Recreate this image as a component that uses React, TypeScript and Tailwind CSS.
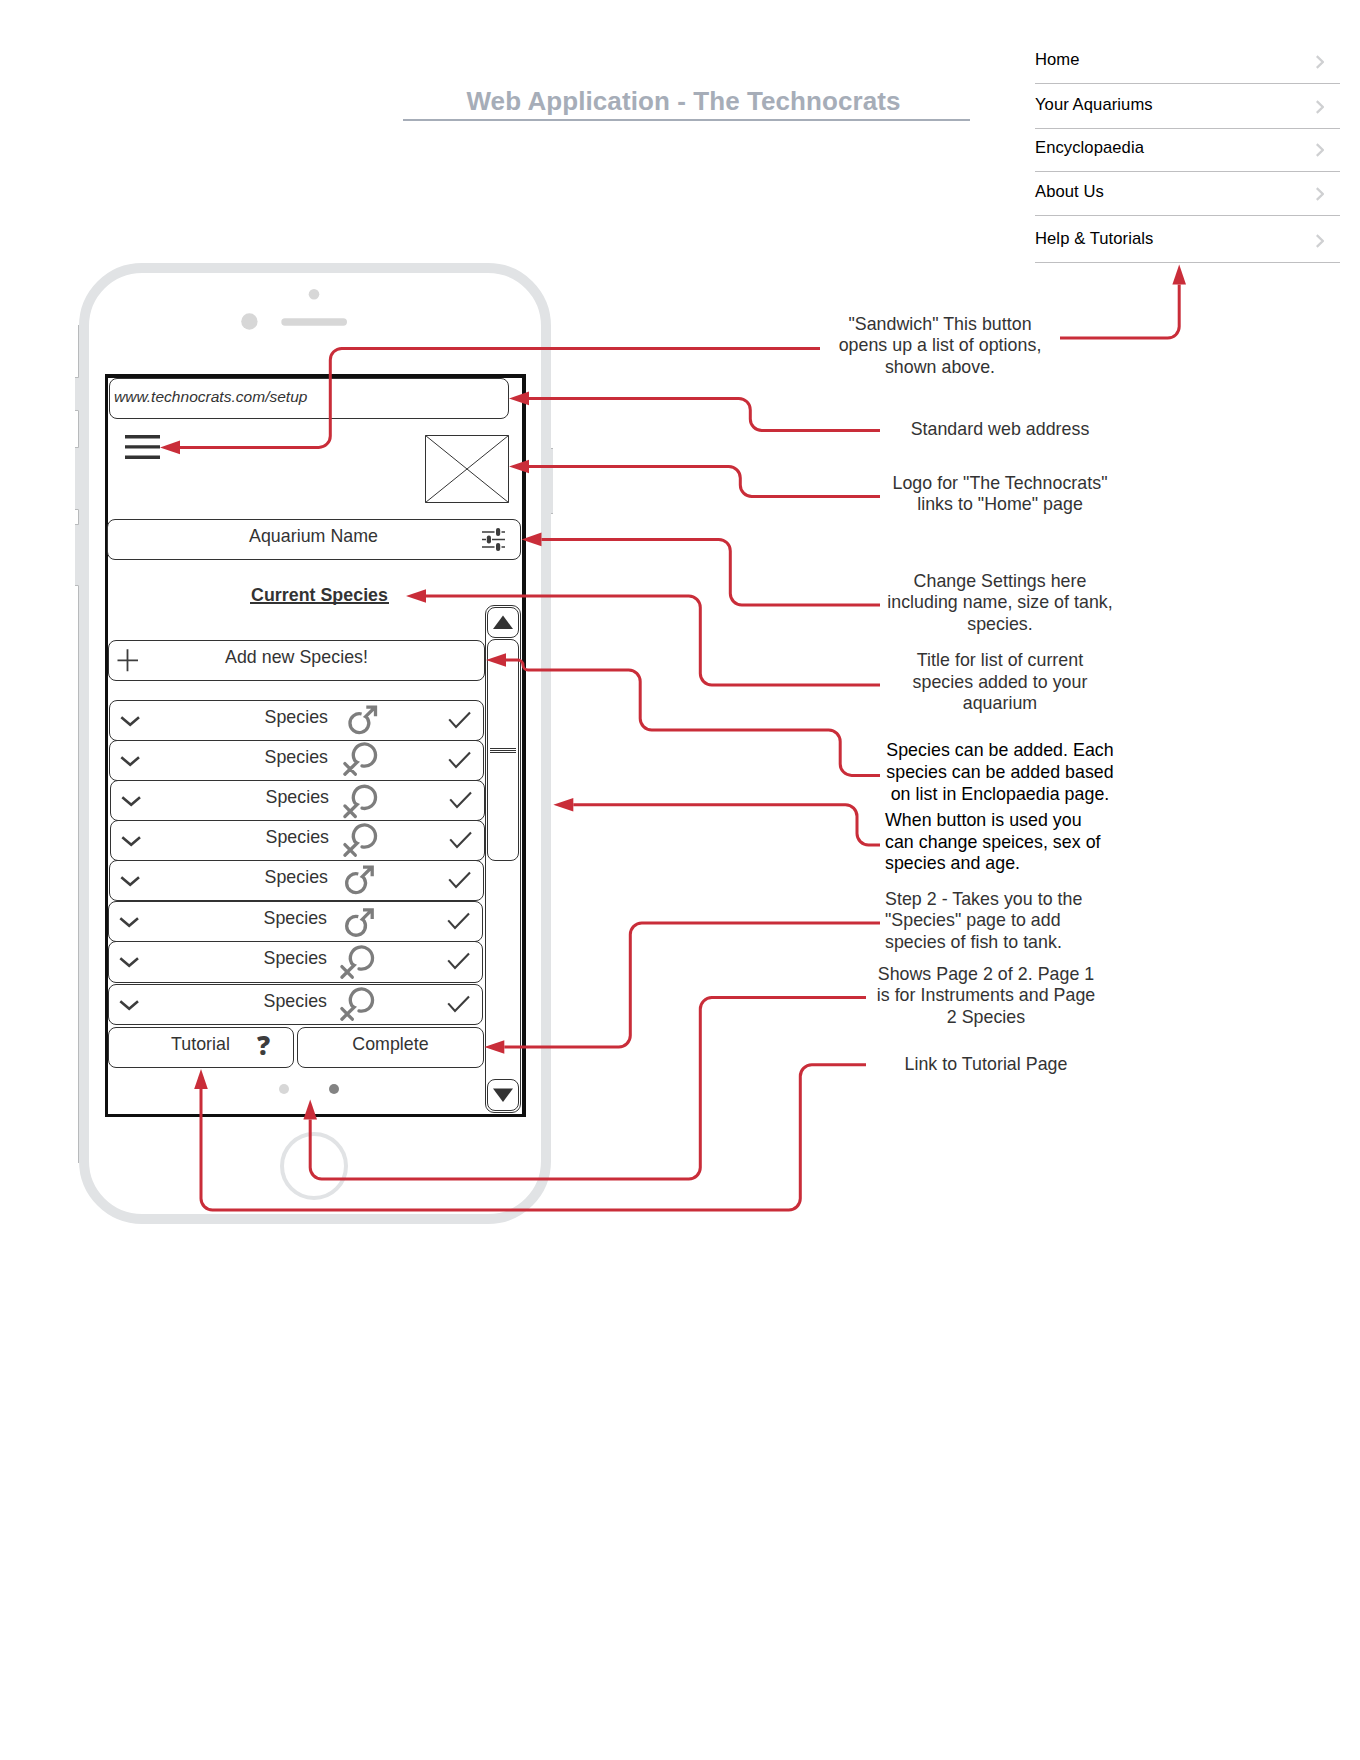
import React from "react";

const MENU = [
  { label: "Home", row: "h-[54px]", text: "mt-[20px]" },
  { label: "Your Aquariums", row: "h-[45px]", text: "mt-[11px]" },
  { label: "Encyclopaedia", row: "h-[43px]", text: "mt-[9px]" },
  { label: "About Us", row: "h-[44px]", text: "mt-[10px]" },
  { label: "Help & Tutorials", row: "h-[47px]", text: "mt-[13px]" },
];

type Sex = "male" | "female";

const SPECIES: { sex: Sex; cx: number; cy: number; box: string }[] = [
  { sex: "male", cx: 27.3, cy: 22, box: "ml-px mt-[19px] h-[41px]" },
  { sex: "female", cx: 32.3, cy: 14, box: "ml-px -mt-px h-[41px]" },
  { sex: "female", cx: 31.3, cy: 16.3, box: "ml-[2px] -mt-px h-[41px]" },
  { sex: "female", cx: 31.3, cy: 15, box: "ml-[2px] -mt-px h-[41px]" },
  { sex: "male", cx: 24, cy: 22, box: "ml-px -mt-px h-[41px]" },
  { sex: "male", cx: 25, cy: 23.7, box: "h-[41px]" },
  { sex: "female", cx: 30.3, cy: 16, box: "-mt-px h-[42px]" },
  { sex: "female", cx: 30.3, cy: 15, box: "mt-px h-[41px]" },
];

const NOTES: { lines: string[]; cls: string }[] = [
  { lines: ['"Sandwich" This button', "opens up a list of options,", "shown above."], cls: "mt-[50.5px] w-60 text-center text-[#333]" },
  { lines: ["Standard web address"], cls: "mt-[40.4px] ml-[60px] w-60 text-center text-[#333]" },
  { lines: ['Logo for "The Technocrats"', 'links to "Home" page'], cls: "mt-[32.1px] ml-[60px] w-60 text-center text-[#333]" },
  { lines: ["Change Settings here", "including name, size of tank,", "species."], cls: "mt-[54.7px] ml-[60px] w-60 text-center text-[#333]" },
  { lines: ["Title for list of current", "species added to your", "aquarium"], cls: "mt-[14.2px] ml-[60px] w-60 text-center text-[#333]" },
  { lines: ["Species can be added. Each", "species can be added based", "on list in Enclopaedia page."], cls: "mt-[25.3px] ml-[60px] w-60 text-center text-black" },
  { lines: ["When button is used you", "can change speices, sex of", "species and age."], cls: "mt-[4.7px] ml-[65px] w-60 text-black" },
  { lines: ["Step 2 - Takes you to the", '"Species" page to add', "species of fish to tank."], cls: "mt-[13.6px] ml-[65px] w-60 text-[#333]" },
  { lines: ["Shows Page 2 of 2. Page 1", "is for Instruments and Page", "2 Species"], cls: "mt-[10px] ml-[46px] w-60 text-center text-[#333]" },
  { lines: ["Link to Tutorial Page"], cls: "mt-[25px] ml-[46px] w-60 text-center text-[#333]" },
];

type Point = [number, number];

// Each connector runs from its note to the arrow tip.
const CONNECTORS: Point[][] = [
  [[820, 348.4], [330.3, 348.4], [330.3, 447.4], [160, 447.4]],
  [[880, 430.5], [750.3, 430.5], [750.3, 398.4], [509, 398.4]],
  [[880, 496.5], [740.3, 496.5], [740.3, 466.5], [509, 466.5]],
  [[880, 605], [730.3, 605], [730.3, 539.4], [521.5, 539.4]],
  [[880, 685], [700.3, 685], [700.3, 596], [406, 596]],
  [[880, 775.4], [840.2, 775.4], [840.2, 730], [640.2, 730], [640.2, 670], [523, 670], [523, 660], [486, 660]],
  [[880, 845], [857, 845], [857, 804.7], [553.3, 804.7]],
  [[880, 923], [630.3, 923], [630.3, 1047], [484.3, 1047]],
  [[866, 997.6], [700.3, 997.6], [700.3, 1179], [310.2, 1179], [310.2, 1099.5]],
  [[866, 1064.8], [800.3, 1064.8], [800.3, 1210], [201, 1210], [201, 1069]],
  [[1060, 338.1], [1179.2, 338.1], [1179.2, 264.5]],
];

function towards(from: Point, to: Point, distance: number): Point {
  const length = Math.hypot(to[0] - from[0], to[1] - from[1]);
  return [
    from[0] + ((to[0] - from[0]) * distance) / length,
    from[1] + ((to[1] - from[1]) * distance) / length,
  ];
}

function Connector({ points }: { points: Point[] }) {
  const tip = points[points.length - 1];
  const previous = points[points.length - 2];
  const base = towards(tip, previous, 20);
  const route = [...points.slice(0, -1), base];
  let d = `M${route[0].join(" ")}`;
  for (let i = 1; i < route.length - 1; i++) {
    const before = Math.hypot(route[i][0] - route[i - 1][0], route[i][1] - route[i - 1][1]);
    const after = Math.hypot(route[i + 1][0] - route[i][0], route[i + 1][1] - route[i][1]);
    const r = Math.min(11.5, before / 2, after / 2 < 6 ? after / 2 : 11.5);
    const a = towards(route[i], route[i - 1], r);
    const b = towards(route[i], route[i + 1], r);
    const cross =
      (route[i][0] - route[i - 1][0]) * (route[i + 1][1] - route[i][1]) -
      (route[i][1] - route[i - 1][1]) * (route[i + 1][0] - route[i][0]);
    d += `L${a.join(" ")}A${r} ${r} 0 0 ${cross > 0 ? 1 : 0} ${b.join(" ")}`;
  }
  d += `L${base.join(" ")}`;
  const horizontal = tip[1] === base[1];
  const head = horizontal
    ? `M${tip.join(" ")}L${base[0]} ${base[1] - 6.8}V${base[1] + 6.8}Z`
    : `M${tip.join(" ")}L${base[0] - 6.8} ${base[1]}H${base[0] + 6.8}Z`;
  return (
    <g>
      <path d={d} fill="none" stroke="#c92d39" strokeWidth="3" />
      <path d={head} fill="#c92d39" />
    </g>
  );
}

function SexIcon({ sex, cx, cy }: { sex: Sex; cx: number; cy: number }) {
  return (
    <svg className="h-[39px] w-[100px] shrink-0 overflow-visible" fill="none" stroke="#7d7d7d" strokeWidth="3.3">
      <g transform={`translate(${cx} ${cy})`}>
        {sex === "male" ? (
          <path d="M2.3 -9A9.4 9.4 0 1 0 8.3 -4.4Q7 -6 6.3 -6.4L16 -16M7 -15.8H16.2V-6.8" />
        ) : (
          <path d="M-2.3 10.9A11.1 11.1 0 1 0 -9.6 5.4Q-8.6 6.6 -7.2 7.2L-19.4 19.2M-19.4 8.6L-9 19.2" strokeLinecap="round" />
        )}
      </g>
    </svg>
  );
}

function SpeciesRow({ sex, cx, cy, box }: (typeof SPECIES)[number]) {
  return (
    <div className={`flex w-[375px] shrink-0 rounded-lg border border-[#333] ${box}`}>
      <svg className="h-[39px] w-[154.5px] shrink-0" fill="none" stroke="#3d3d3d" strokeWidth="2.6">
        <path d="M11.3 16.3L20.2 23.7L29 16.3" />
      </svg>
      <span className="mt-[5px] w-[67.5px] shrink-0 leading-[22px]">Species</span>
      <SexIcon sex={sex} cx={cx} cy={cy} />
      <svg className="h-[39px] w-[42px] shrink-0" fill="none" stroke="#3d3d3d" strokeWidth="2.1">
        <path d="M17.2 18.4L24 26L38 11.4" />
      </svg>
    </div>
  );
}

function Scrollbar() {
  return (
    <div className="mt-[45px] flex h-[508px] w-9 flex-col rounded-[9px] border border-[#333] px-px pt-px pb-px">
      <div className="flex h-[31px] shrink-0 justify-center rounded-lg border border-[#333]">
        <svg className="h-[29px] w-5" fill="#333">
          <path d="M0 21L10 7.5L20 21Z" />
        </svg>
      </div>
      <div className="mt-px flex h-[222px] shrink-0 justify-center rounded-lg border border-[#333]">
        <svg className="h-[120px] w-[26px]" stroke="#333" strokeWidth="1">
          <path d="M0 108.5H26M0 110.5H26M0 112.5H26" />
        </svg>
      </div>
      <div className="mt-auto flex h-8 shrink-0 justify-center rounded-lg border border-[#333]">
        <svg className="h-[30px] w-5" fill="#333">
          <path d="M0 8.5L10 22L20 8.5Z" />
        </svg>
      </div>
    </div>
  );
}

function Phone() {
  return (
    <div className="ml-[79px] h-[961px] w-[472px] rounded-[63px] border-[10px] border-[#e1e3e5]">
      <svg className="h-[101px] w-full" fill="#d7d7d7">
        <circle cx="225" cy="21.3" r="5.3" />
        <circle cx="160.4" cy="48.5" r="8.2" />
        <rect x="192.3" y="45.3" width="65.7" height="7.5" rx="3.7" />
      </svg>
      <div className="ml-4 h-[743px] w-[421px] border-t-4 border-r-4 border-b-[3px] border-l-[3px] border-[#0f0f0f]">
        <div className="ml-px h-[41px] w-[400px] rounded-lg border border-[#333] pt-[8px] pl-[4px] text-[15.5px] leading-[20px] tracking-[0.02px] italic">
          www.technocrats.com/setup
        </div>
        <div className="flex h-[100px] justify-between pt-4 pr-[13px] pl-[17px]">
          <svg className="h-[26px] w-[35px]" stroke="#333" strokeWidth="3.4">
            <path d="M0 1.7H35M0 11.9H35M0 22.2H35" />
          </svg>
          <svg className="h-[68px] w-[84px]" fill="none" stroke="#333" strokeWidth="1">
            <path d="M.5 .5H83.5V67.5H.5ZM.5 .5L83.5 67.5M83.5 .5L.5 67.5" />
          </svg>
        </div>
        <div className="-ml-px flex h-[41px] w-[414px] justify-between rounded-lg border border-[#333] pr-[15px] pl-[141px]">
          <span className="mt-[5px] leading-[22px]">Aquarium Name</span>
          <svg className="h-[39px] w-[23px]" fill="none" stroke="#3d3d3d" strokeWidth="1.5">
            <path d="M0 12H12.5M19.5 12H23M0 19.4H4M10 19.4H23M0 27H12.5M19.5 27H23" />
            <g fill="#3d3d3d" stroke="none">
              <rect x="14" y="8" width="4.2" height="8" rx="2" />
              <rect x="4.8" y="15.4" width="4.2" height="8" rx="2" />
              <rect x="14" y="23" width="4.2" height="8" rx="2" />
            </g>
          </svg>
        </div>
        <div className="flex">
          <div className="flex w-[377px] flex-col">
            <div className="h-[80px] pt-6 pl-[142px] leading-[22px] font-bold">
              <span className="inline-block h-5 border-b-2 border-[#333] pr-px pl-px">Current Species</span>
            </div>
            <div className="flex h-[41px] w-[377px] rounded-lg border border-[#333]">
              <svg className="h-[39px] w-[116px]" fill="none" stroke="#3d3d3d" strokeWidth="1.8">
                <path d="M8.5 19.3H29M18.5 8.3V30.3" />
              </svg>
              <span className="mt-[5px] leading-[22px]">Add new Species!</span>
            </div>
            {SPECIES.map((row, i) => (
              <SpeciesRow key={i} {...row} />
            ))}
            <div className="mt-[2px] flex gap-[3px]">
              <div className="flex h-[41px] w-[186px] rounded-lg border border-[#333] pl-[62px]">
                <span className="mt-[5px] w-[86px] leading-[22px]">Tutorial</span>
                <span className="font-['Open_Sans'] text-[26px] leading-[34px] font-extrabold text-[#3d3d3d]">?</span>
              </div>
              <div className="h-[41px] w-[187px] rounded-lg border border-[#333] pt-[5px] text-center leading-[22px]">
                Complete
              </div>
            </div>
            <div className="mt-4 ml-[171px] flex gap-10">
              <div className="size-[10px] rounded-full bg-[#d7d7d7]" />
              <div className="size-[10px] rounded-full bg-[#838383]" />
            </div>
          </div>
          <Scrollbar />
        </div>
      </div>
      <div className="mt-[15px] ml-[191px] size-[68px] rounded-full border-4 border-[#e1e3e5]" />
    </div>
  );
}

export default function App() {
  return (
    <main className="relative h-[1760px] w-[1360px] overflow-hidden bg-white font-['Liberation_Sans',Arial,sans-serif] text-[17.8px] tracking-[0.04px] text-[#333]">
      <header className="flex h-[263px] pl-[403px]">
        <h1 className="mt-[84px] h-[37px] w-[567px] border-b-2 border-[#a6adb8] pr-[6px] text-center text-[26px] leading-[34px] font-bold tracking-[0.08px] text-[#a6adb8]">
          Web Application - The Technocrats
        </h1>
        <nav className="ml-[65px] w-[305px] pt-[30px] text-[16.6px] text-black">
          {MENU.map((item) => (
            <div key={item.label} className={`flex justify-between border-b border-[#bfbfc1] pr-4 ${item.row}`}>
              <span className={`leading-5 tracking-[0.08px] ${item.text}`}>{item.label}</span>
              <svg className={`h-6 w-2 ${item.text}`} fill="none" stroke="#cfd0d2" strokeWidth="2.3">
                <path d="M.8 6.2L6.8 12L.8 17.8" />
              </svg>
            </div>
          ))}
        </nav>
      </header>

      <div className="flex">
        <div className="w-[820px]">
          <Phone />
        </div>
        <div className="flex flex-col">
          {NOTES.map((note) => (
            <p key={note.lines[0]} className={`leading-[21.67px] whitespace-nowrap ${note.cls}`}>
              {note.lines.map((line) => (
                <span key={line} className="block">
                  {line}
                </span>
              ))}
            </p>
          ))}
        </div>
      </div>

      <svg className="pointer-events-none absolute inset-0" width="1360" height="1760">
        <g fill="#e1e3e5">
          <rect x="75" y="377" width="5" height="33" />
          <rect x="75" y="447" width="5" height="62" />
          <rect x="75" y="524" width="5" height="61" />
          <rect x="550.5" y="448" width="2.5" height="65" />
        </g>
        <path
          d="M78.5 325V377.5H75M75 410.5H78.5V447.5H75M75 509.5H78.5V524.5H75M75 585.5H78.5V1163M551 448.5H553M551 513.5H553"
          fill="none"
          stroke="#b8babc"
          strokeWidth="1"
        />
        {CONNECTORS.map((points, i) => (
          <Connector key={i} points={points} />
        ))}
      </svg>
    </main>
  );
}
